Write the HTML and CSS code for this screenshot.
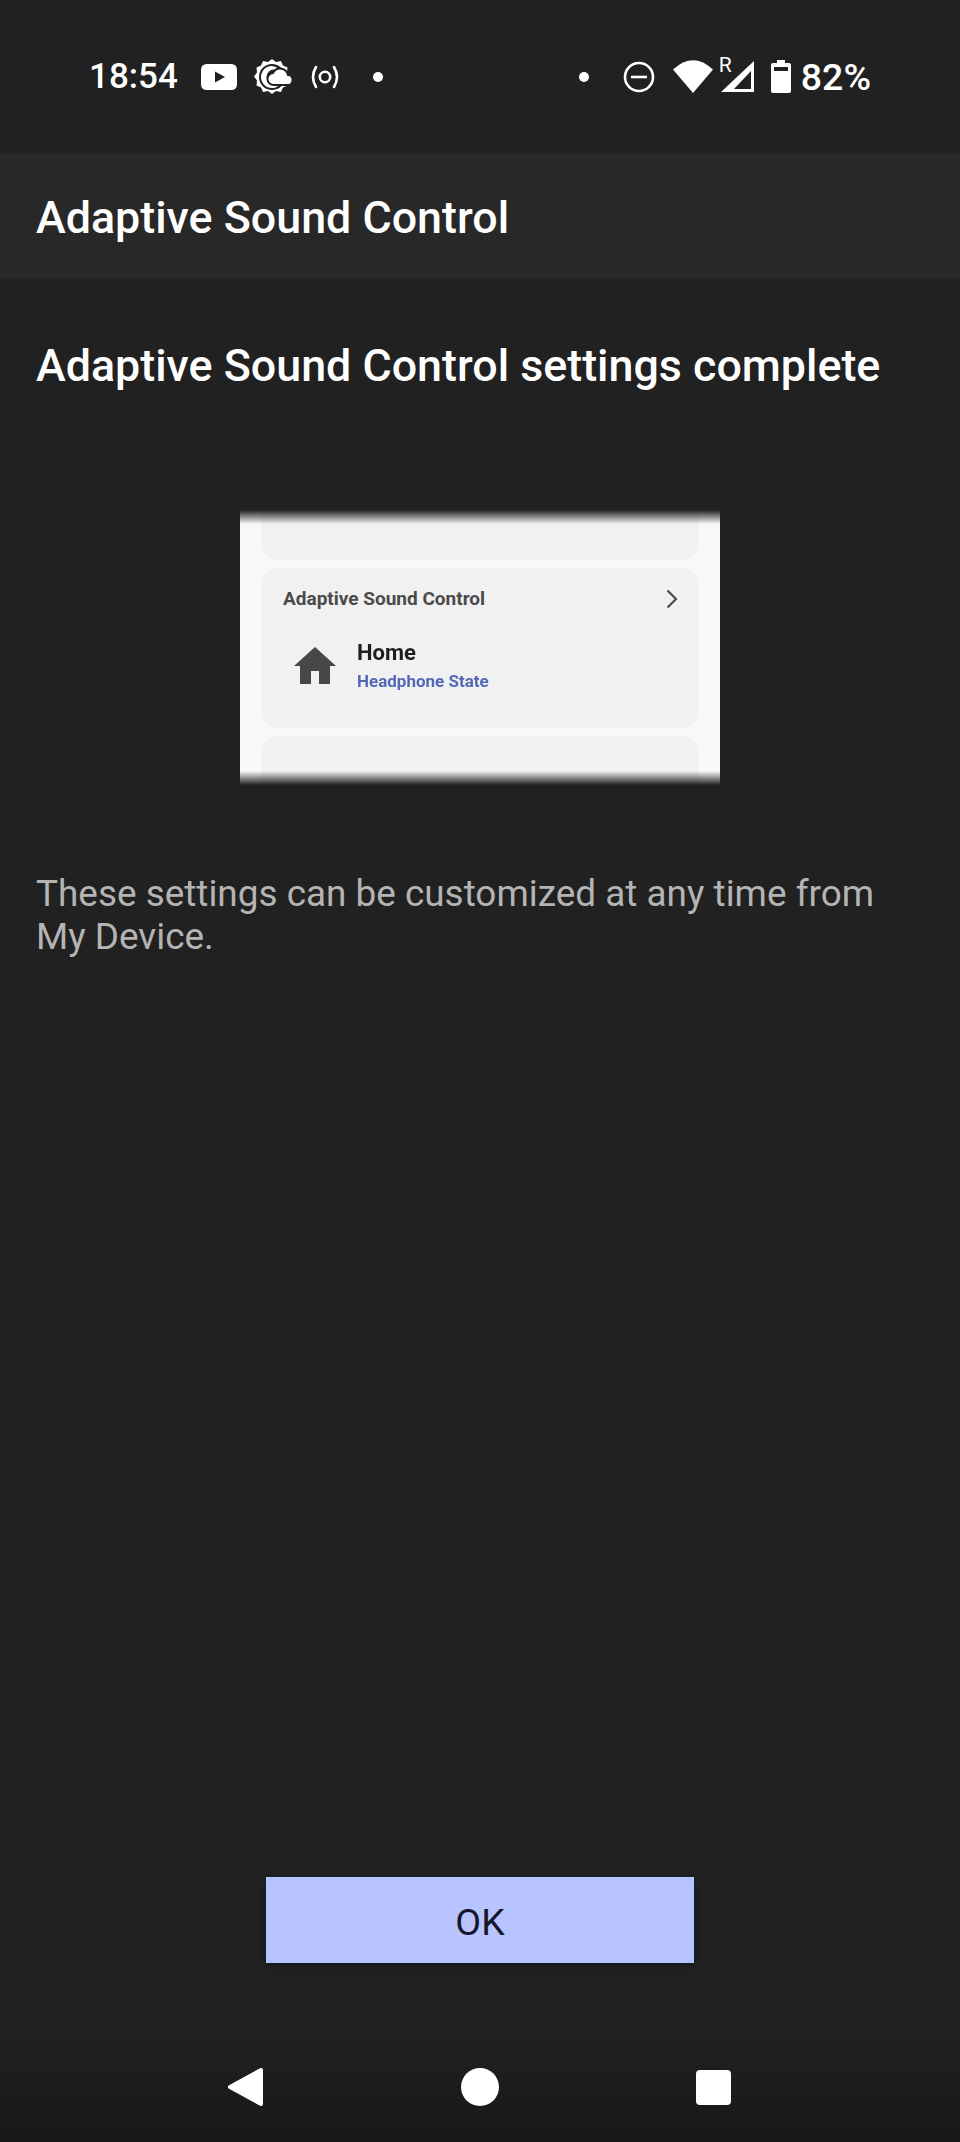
FILE: index.html
```html
<!DOCTYPE html>
<html>
<head>
	<meta charset="UTF-8">
	<meta name="viewport" content="width=device-width, initial-scale=1, maximum-scale=1">
	<title>Adaptive Sound Control</title>
	<link rel="stylesheet" href="styles.css">
</head>
<body>

<div class="screen">
	<div class="statusBar">
		<div class="statusGroup">
			<span class="clock">18:54</span>
			<svg class="icoYoutube" width="36" height="26" viewBox="0 0 36 26"><path fill="#fff" fill-rule="evenodd" d="M6 0H30Q36 0 36 6V20Q36 26 30 26H6Q0 26 0 20V6Q0 0 6 0ZM14 7.500V18.500L24 13Z"/></svg>
			<svg class="icoWeather" width="38" height="36" viewBox="0 0 38 36"><path fill="#fff" d="M18 0l4 3 5-1 2 4.500 4.500 2-.5 5 3 4-3 4 .5 5-4.500 2-2 4.500-5-1-4 3-4-3-5 1-2-4.500-4.500-2 .5-5-3-4 3-4-.5-5 4.500-2 2-4.500 5 1z"/><circle cx="18" cy="18" r="13" fill="#212121"/><path fill="#fff" d="M18 7a11 11 0 1 0 8 18.500h-6a7.500 7.500 0 0 1-7.500-7.500 7.500 7.500 0 0 1 7.500-7.500h5a11 11 0 0 0-7-3.500z"/><path fill="#fff" stroke="#212121" stroke-width="2" d="M20 26a6 6 0 0 1-1-12 8 8 0 0 1 15 2 5 5 0 0 1-1 10z"/></svg>
			<svg class="icoCast" width="30" height="24" viewBox="0 0 30 24"><g fill="none" stroke="#fff" stroke-width="2.600" stroke-linecap="round"><path d="M6 2Q0 12 6 22"/><path d="M24 2Q30 12 24 22"/><circle cx="15" cy="12" r="5.200"/></g></svg>
			<span class="dot dotLeft"></span>
		</div>
		<div class="statusGroup">
			<span class="dot"></span>
			<svg class="icoDnd" width="32" height="32" viewBox="0 0 32 32"><circle cx="16" cy="16" r="14" fill="none" stroke="#fff" stroke-width="2.600"/><rect x="8" y="14.700" width="16" height="2.600" fill="#fff"/></svg>
			<svg class="icoWifi" width="40" height="33" viewBox="0 0 40 33"><path fill="#fff" d="M0 9.500Q20-9 40 9.500L20 33Z"/></svg>
			<span class="signal">
				<span class="roaming">R</span>
				<svg width="33" height="31" viewBox="0 0 33 31"><path fill="#fff" fill-rule="evenodd" d="M33 0V31H0ZM30 10L13 28H30Z"/></svg>
			</span>
			<svg class="icoBattery" width="20" height="33" viewBox="0 0 20 33"><path fill="#fff" fill-rule="evenodd" d="M6 0H14V3H18Q20 3 20 5V31Q20 33 18 33H2Q0 33 0 31V5Q0 3 2 3H6ZM3 7V11H17V7Z"/></svg>
			<span class="percent">82%</span>
		</div>
	</div>

	<div class="appBar">Adaptive Sound Control</div>

	<div class="content">
		<h1 class="heading">Adaptive Sound Control settings complete</h1>

		<div class="preview">
			<div class="previewIn">
				<div class="previewCard cardTop"></div>
				<div class="previewCard cardMain">
					<div class="cardTitle">
						<span>Adaptive Sound Control</span>
						<svg width="12" height="20" viewBox="0 0 12 20"><path fill="none" stroke="#4a4a4a" stroke-width="2.200" d="M1.500 1.500L10 10L1.500 18.500"/></svg>
					</div>
					<div class="cardRow">
						<svg class="rowIcon" width="42" height="37" viewBox="0 0 42 37"><path fill="#47474a" d="M21 0L42 19H36V37H25V24H17V37H6V19H0Z"/></svg>
						<div>
							<div class="rowName">Home</div>
							<div class="rowState">Headphone State</div>
						</div>
					</div>
				</div>
				<div class="previewCard cardBottom"></div>
			</div>
		</div>

		<p class="note">These settings can be customized at any time from<br>My Device.</p>
	</div>

	<div class="actions">
		<div class="okButton">OK</div>
	</div>

	<div class="navBar">
		<svg width="36" height="40" viewBox="0 0 36 40"><path fill="#fff" stroke="#fff" stroke-width="4" stroke-linejoin="round" d="M2 20L33 3V37Z"/></svg>
		<span class="navHome"></span>
		<span class="navRecent"></span>
	</div>
</div>

</body>
</html>
```

FILE: styles.css
```css
html, body
{
	height: 100%;
	margin: 0;
	padding: 0;
	background-color: #212121;
	font-family: Roboto, "Liberation Sans", sans-serif;
}

.screen
{
	width: 960px;
	height: 2142px;
	display: flex;
	flex-direction: column;
	overflow: hidden;
}

/* status bar */
.statusBar
{
	height: 153px;
	box-sizing: border-box;
	padding: 0 89px 0 89px;
	display: flex;
	justify-content: space-between;
	align-items: center;
	color: #fff;
}
.statusGroup
{
	display: flex;
	align-items: center;
}
.clock
{
	font-size: 35px;
	font-weight: 500;
	margin-right: 23px;
}
.icoWeather { margin-left: 17px; }
.icoCast { margin-left: 18px; }
.dot
{
	width: 10px;
	height: 10px;
	border-radius: 50%;
	background-color: #fff;
}
.dotLeft { margin-left: 33px; }
.icoDnd { margin-left: 34px; }
.icoWifi { margin-left: 18px; }
.signal
{
	position: relative;
	margin-left: 8px;
	display: block;
	height: 31px;
}
.roaming
{
	position: absolute;
	top: -7px;
	left: -2px;
	font-size: 21px;
	line-height: 22px;
}
.icoBattery { margin-left: 17px; }
.percent
{
	font-size: 37.500px;
	font-weight: 500;
	margin-left: 10px;
}

/* title */
.appBar
{
	height: 126px;
	box-sizing: border-box;
	padding: 3px 0 0 36px;
	line-height: 123px;
	background-color: #282828;
	color: #fff;
	font-size: 44.800px;
	font-weight: 500;
}

.content
{
	flex: 1;
	padding: 0 36px;
}
.heading
{
	margin: 61px 0 0 0;
	color: #fff;
	font-size: 44.800px;
	line-height: 52px;
	font-weight: 500;
}

/* picture of the my device card */
.preview
{
	position: relative;
	width: 480px;
	height: 275px;
	margin: 118px auto 0 auto;
	background-color: #f8f9f9;
	overflow: hidden;
}
.preview:before, .preview:after
{
	content: "";
	position: absolute;
	left: 0;
	right: 0;
	height: 14px;
	z-index: 1;
}
.preview:before
{
	top: 0;
	background: linear-gradient(#212121, rgba(33, 33, 33, 0));
}
.preview:after
{
	bottom: 0;
	background: linear-gradient(rgba(33, 33, 33, 0), #212121);
}
.previewIn
{
	display: flex;
	flex-direction: column;
	gap: 8px;
	padding: 0 21px;
	filter: blur(0.7px);
}
.previewCard
{
	background-color: #f1f1f1;
	border-radius: 18px;
}
.cardTop
{
	height: 50px;
	border-radius: 0 0 18px 18px;
}
.cardMain
{
	height: 160px;
	box-sizing: border-box;
	padding: 18px 21px 0 22px;
}
.cardBottom
{
	height: 60px;
	border-radius: 18px 18px 0 0;
}
.cardTitle
{
	display: flex;
	justify-content: space-between;
	align-items: center;
	color: #4a4a4a;
	font-size: 19px;
	line-height: 26px;
	font-weight: 700;
}
.cardRow
{
	display: flex;
	align-items: center;
	gap: 21px;
	margin: 26px 0 0 11px;
}
.rowIcon { margin-bottom: 3px; }
.rowName
{
	color: #1e1e1e;
	font-size: 22px;
	line-height: 30px;
	font-weight: 700;
}
.rowState
{
	color: #5468b8;
	font-size: 17px;
	line-height: 27px;
	font-weight: 700;
}

.note
{
	margin: 87px 0 0 0;
	color: #b4b4b4;
	font-size: 36.900px;
	line-height: 43px;
}

/* button and nav */
.actions
{
	display: flex;
	justify-content: center;
	padding-bottom: 63px;
}
.okButton
{
	width: 428px;
	height: 86px;
	box-sizing: border-box;
	padding-top: 4px;
	line-height: 82px;
	text-align: center;
	background-color: #b8c4ff;
	color: #14162a;
	font-size: 37.500px;
	font-weight: 400;
	box-shadow: 0 3px 6px rgba(0, 0, 0, 0.3);
}
.navBar
{
	height: 116px;
	box-sizing: border-box;
	padding: 6px 229px 0 228px;
	display: flex;
	justify-content: space-between;
	align-items: center;
	background: linear-gradient(#212121, #181818);
}
.navHome
{
	width: 38px;
	height: 38px;
	border-radius: 50%;
	background-color: #fff;
}
.navRecent
{
	width: 35px;
	height: 35px;
	border-radius: 4px;
	background-color: #fff;
}
```
